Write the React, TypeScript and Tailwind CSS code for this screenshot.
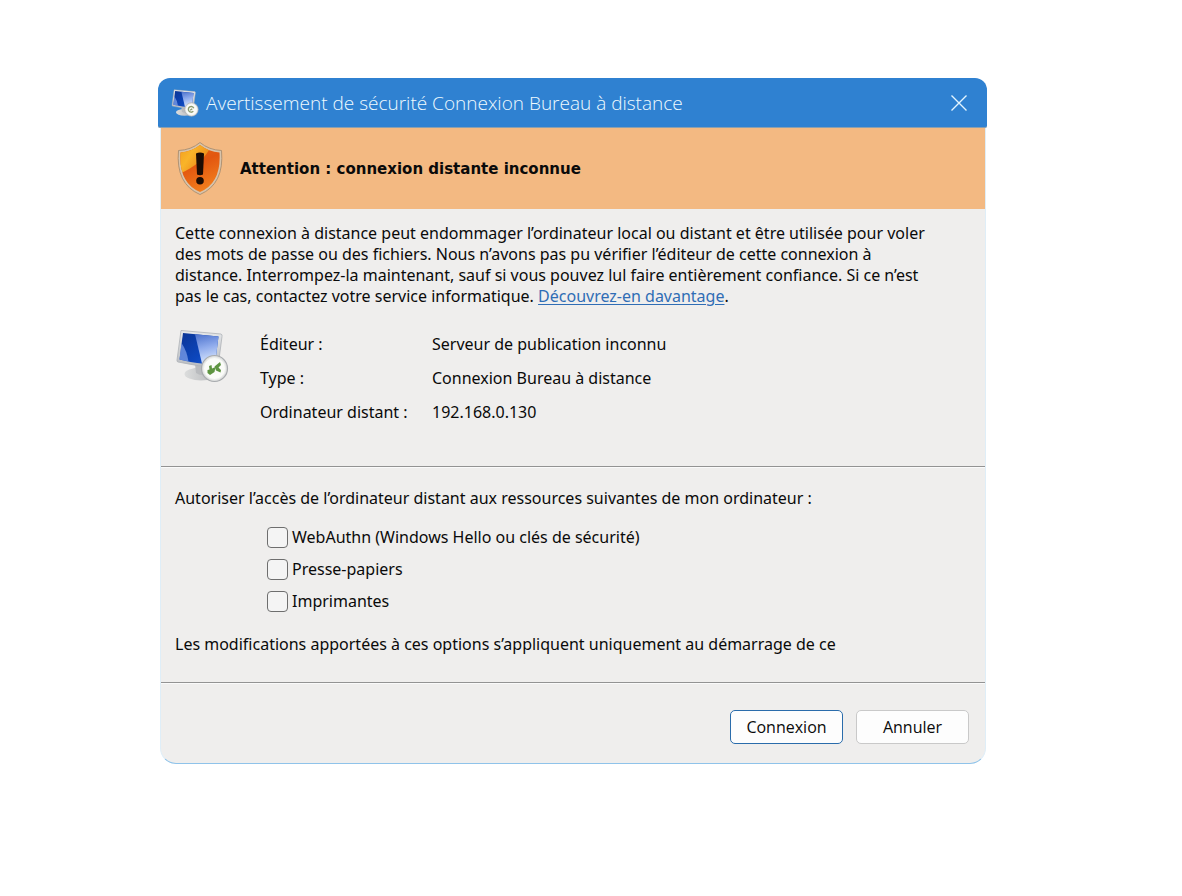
import { useState } from "react";

const details = [
  { label: "Éditeur :", value: "Serveur de publication inconnu" },
  { label: "Type :", value: "Connexion Bureau à distance" },
  { label: "Ordinateur distant :", value: "192.168.0.130" }
];

const resources = [
  { id: "webauthn", label: "WebAuthn (Windows Hello ou clés de sécurité)" },
  { id: "clipboard", label: "Presse-papiers" },
  { id: "printers", label: "Imprimantes" }
];

function RemoteDesktopIcon({ className, id, small = false }: { className: string; id: string; small?: boolean }) {
  return (
    <svg className={className} viewBox="0 0 54 54" aria-hidden="true">
      <defs>
        <linearGradient id={`${id}-frame`} x1="0" y1="0" x2="0" y2="1">
          <stop offset="0" stopColor="#e6e8ea" />
          <stop offset="1" stopColor="#b9bcc1" />
        </linearGradient>
        <linearGradient id={`${id}-screen`} x1="0" y1="0" x2="1" y2="1">
          <stop offset="0" stopColor="#0a3494" />
          <stop offset="0.6" stopColor="#0c46bc" />
          <stop offset="1" stopColor="#1f5bd0" />
        </linearGradient>
        <linearGradient id={`${id}-glare`} x1="0" y1="0" x2="0.2" y2="1">
          <stop offset="0" stopColor="#4a70cc" />
          <stop offset="0.5" stopColor="#8fabec" />
          <stop offset="1" stopColor="#d6e4fc" />
        </linearGradient>
        <linearGradient id={`${id}-base`} x1="0" y1="0" x2="1" y2="0">
          <stop offset="0" stopColor="#dcdddd" />
          <stop offset="1" stopColor="#b2b4b7" />
        </linearGradient>
      </defs>
      <ellipse cx="26" cy="45" rx="16.5" ry="6.5" fill={`url(#${id}-base)`} />
      <path d="M20 35 L36 38 L34 45 Q27 48 21 44 Z" fill="#b9bbbe" />
      <path d="M6 1.5 L46 5 Q47.500 5.500 47 7.500 L43 38 Q24 38 3 33 Q1.500 32.500 2 31 Z" fill={`url(#${id}-frame)`} stroke="#aeb2b8" strokeWidth="0.8" />
      <path d="M8 4 L43.500 7.500 L40 35.500 Q22 35 4.500 30.500 Z" fill={`url(#${id}-screen)`} />
      <path d="M20 5.200 L43.500 7.500 L40 35.500 L27 34.500 Z" fill={`url(#${id}-glare)`} />
      <path d="M6.500 14 Q12 22 13.500 32.500 L4.500 30.500 Z" fill="#7d9fe8" opacity="0.75" />
      <circle cx="39.500" cy="39.500" r="13" fill="#dfe0df" stroke="#a8abae" strokeWidth="1.2" />
      <circle cx="39.500" cy="39.500" r="11" fill="#fafbf8" stroke="#eceeec" strokeWidth="1" />
      {small ? (
        <path d="M43 43 a5.500 5.500 0 1 1 1 -6 M37 41 l4 -3" fill="none" stroke="#8a9a6e" strokeWidth="2.6" />
      ) : (
        <g fill="#5d9440">
          <path d="M34 37 L36.500 36 L37 39.500 L40.500 38 L39.500 43 L35 46 L32.500 44 L32.500 41 L34.500 40.500 Z" />
          <path d="M45 33 L46 36 L43.500 38.500 L46 41 L45.500 43.500 L41 41.500 L39.500 37.500 Z" />
        </g>
      )}
    </svg>
  );
}

function ShieldIcon() {
  return (
    <svg className="h-[54px] w-[46px] shrink-0" viewBox="0 0 46 54" aria-hidden="true">
      <defs>
        <linearGradient id="shield-fill" x1="0" y1="0" x2="0.4" y2="1">
          <stop offset="0" stopColor="#ea7414" />
          <stop offset="0.5" stopColor="#e2560f" />
          <stop offset="1" stopColor="#f3801e" />
        </linearGradient>
        <linearGradient id="shield-light" x1="0" y1="0" x2="1" y2="0.6">
          <stop offset="0" stopColor="#f0981c" />
          <stop offset="0.45" stopColor="#f9b429" />
          <stop offset="1" stopColor="#ea7a14" />
        </linearGradient>
        <clipPath id="shield-clip">
          <path d="M23 3 Q32 10 42.500 10.500 Q44.500 41 23 50 Q1.500 41 3.500 10.500 Q14 10 23 3 Z" />
        </clipPath>
      </defs>
      <path d="M23 0.500 Q32 8 44.500 8.500 Q47.500 42 23 52.500 Q-1.500 42 1.500 8.500 Q14 8 23 0.500 Z" fill="#d8c3aa" stroke="#a88d70" strokeWidth="0.9" />
      <g clipPath="url(#shield-clip)">
        <path d="M0 0 H46 V54 H0 Z" fill="url(#shield-fill)" />
        <path d="M0 0 H36 Q28 21 2 32 Z" fill="url(#shield-light)" />
      </g>
      <path d="M19 11.500 Q23 9.500 27 11.500 L26 32.500 Q23 34 20 32.500 Z" fill="#1c0c04" />
      <circle cx="23" cy="38.800" r="3.800" fill="#1c0c04" />
    </svg>
  );
}

export default function App() {
  const [checked, setChecked] = useState<Record<string, boolean>>({});

  return (
    <main className="min-h-screen bg-white pt-[78px] pr-[195px] pb-16 pl-[158px] font-['Noto_Sans',sans-serif] text-base leading-[21px] text-[#0a0a0a]">
      <section role="dialog" aria-labelledby="dialog-title">
        <header className="flex h-[50px] items-center rounded-t-xl rounded-b-xs border-b border-[#8b9fae] bg-[#2f81d1] pr-4 pl-[13px]">
          <RemoteDesktopIcon id="title" small className="mr-[7px] size-7 shrink-0" />
          <h1 id="dialog-title" className="flex-1 font-['Open_Sans',sans-serif] text-[19px] leading-6 font-light text-[#eefaff]">
            Avertissement de sécurité Connexion Bureau à distance
          </h1>
          <button type="button" aria-label="Fermer" className="flex size-6 items-center justify-center text-[#e3f5ff]">
            <svg className="size-4" viewBox="0 0 16 16" fill="none" stroke="currentColor" strokeWidth="1.4" aria-hidden="true">
              <path d="M0.500 0.500 L15.500 15.500 M15.500 0.500 L0.500 15.500" />
            </svg>
          </button>
        </header>

        <div className="mr-px ml-0.5 overflow-hidden rounded-b-2xl border-x border-b border-x-[#dfeef8] border-b-[#8fc3ea] bg-[#efeeed]">
          <div className="flex h-[81px] items-center gap-[17px] bg-[#f3b982] pl-4">
            <ShieldIcon />
            <h2 className="font-['DejaVu_Sans',sans-serif] text-[15px] leading-6 font-bold">
              Attention : connexion distante inconnue
            </h2>
          </div>

          <div className="px-3.5 pt-3.5 pb-[43px]">
            <p className="max-w-[765px]">
              Cette connexion à distance peut endommager l’ordinateur local ou distant et être utilisée pour voler des
              mots de passe ou des fichiers. Nous n’avons pas pu vérifier l’éditeur de cette connexion à distance.
              Interrompez-la maintenant, sauf si vous pouvez lul faire entièrement confiance. Si ce n’est pas le cas,
              contactez votre service informatique.{" "}
              <a href="#" className="text-[#2f6db5] underline underline-offset-2">
                Découvrez-en davantage
              </a>
              .
            </p>
            <div className="mt-[27px] flex items-start">
              <RemoteDesktopIcon id="publisher" className="-mt-[5px] mr-[31px] size-[54px] shrink-0" />
              <dl className="grid grid-cols-[172px_1fr] gap-y-[13px]">
                {details.map((item) => (
                  <div key={item.label} className="contents">
                    <dt>{item.label}</dt>
                    <dd>{item.value}</dd>
                  </div>
                ))}
              </dl>
            </div>
          </div>

          <div className="border-t border-[#939393] px-3.5 pt-[21px] pb-[27px] shadow-[inset_0_1px_0_#fafafa]">
            <p>Autoriser l’accès de l’ordinateur distant aux ressources suivantes de mon ordinateur :</p>
            <div className="mt-[18px] mb-[22px] ml-[92px] flex flex-col items-start gap-[11px]">
              {resources.map((item) => (
                <label key={item.id} className="flex items-center gap-1">
                  <input
                    type="checkbox"
                    checked={!!checked[item.id]}
                    onChange={(e) => setChecked({ ...checked, [item.id]: e.target.checked })}
                    className="size-[21px] appearance-none rounded border border-[#6e6e6e] bg-[#f4f4f4] checked:bg-[#2f81d1]"
                  />
                  {item.label}
                </label>
              ))}
            </div>
            <p>Les modifications apportées à ces options s’appliquent uniquement au démarrage de ce</p>
          </div>

          <footer className="flex justify-end gap-[13px] border-t border-[#939393] px-4 pt-[27px] pb-[19px] font-['Open_Sans',sans-serif] shadow-[inset_0_1px_0_#fafafa]">
            <button type="button" className="h-[34px] w-[113px] rounded-[5px] border border-[#2a6cab] bg-[#fdfdfd]">
              Connexion
            </button>
            <button type="button" className="h-[34px] w-[113px] rounded-[5px] border border-[#c9c9c9] bg-[#fdfdfd]">
              Annuler
            </button>
          </footer>
        </div>
      </section>
    </main>
  );
}
